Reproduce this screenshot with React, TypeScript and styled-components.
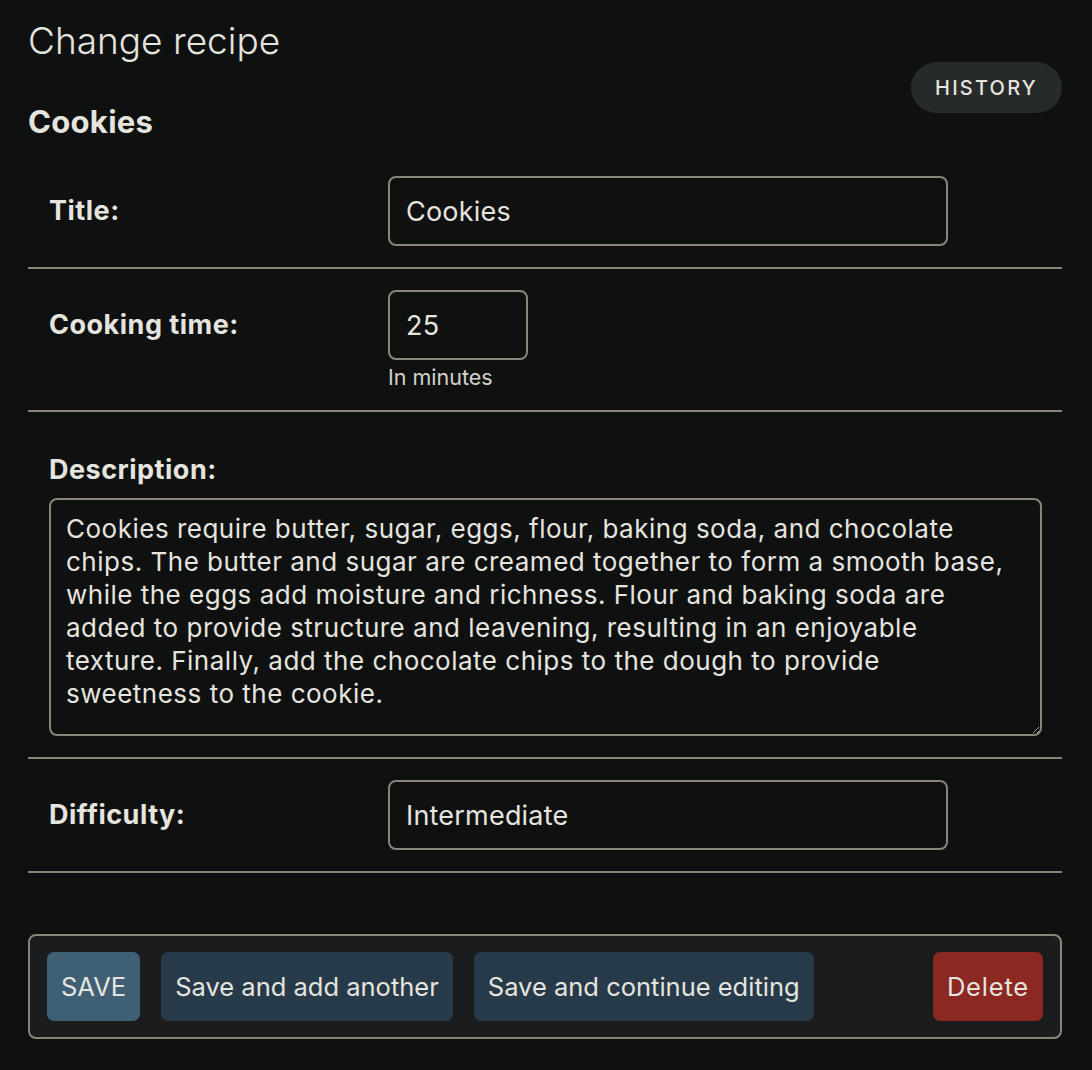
import React from "react";
import styled, { createGlobalStyle } from "styled-components";

const Global = createGlobalStyle`
  html, body {
    margin: 0;
    padding: 0;
    background: #0f1111;
  }
  body {
    font-family: Inter, "Noto Sans", sans-serif;
    color: #e6e4df;
  }
  * { box-sizing: border-box; }
`;

const Page = styled.div`
  padding: 16px 30px 30px 28px;
  min-height: 1070px;
  background: #0f1111;
`;

const Title = styled.h1`
  margin: 0;
  font-size: 37px;
  font-weight: 300;
  line-height: 50px;
  color: #e6e4df;
`;

const HeaderRow = styled.div`
  display: flex;
  justify-content: space-between;
  align-items: flex-start;
`;

const SubTitle = styled.h2`
  margin: 37px 0 0 0;
  font-size: 31px;
  font-weight: 700;
  letter-spacing: 0.3px;
  line-height: 38px;
  color: #e6e4df;
`;

const HistoryButton = styled.button`
  margin-top: -4px;
  height: 51px;
  width: 151px;
  border: none;
  border-radius: 26px;
  background: #272a2b;
  color: #e6e4df;
  font-family: Inter, sans-serif;
  font-size: 20px;
  font-weight: 500;
  letter-spacing: 2.2px;
  text-transform: uppercase;
`;

const Fieldset = styled.div`
  margin-top: 14px;
  display: flex;
  flex-direction: column;
`;

const Row = styled.div<{ $stacked?: boolean }>`
  display: ${(p) => (p.$stacked ? "flex" : "grid")};
  flex-direction: column;
  grid-template-columns: 339px 1fr;
  align-items: ${(p) => (p.$stacked ? "stretch" : "start")};
  gap: ${(p) => (p.$stacked ? "11px" : "0")};
  padding: 21px 21px 21px 21px;
  border-bottom: 2px solid #8a8478;
`;

const Label = styled.label<{ $stacked?: boolean }>`
  font-size: 27px;
  font-weight: 700;
  letter-spacing: 0.5px;
  color: #e6e4df;
  line-height: ${(p) => (p.$stacked ? "34px" : "70px")};
  margin-top: ${(p) => (p.$stacked ? "20px" : "0")};
`;

const Field = styled.div`
  display: flex;
  flex-direction: column;
  align-items: flex-start;
`;

const Input = styled.input<{ $w: number }>`
  width: ${(p) => p.$w}px;
  height: 70px;
  padding: 0 16px;
  background: #0f1111;
  border: 2px solid #8a8478;
  border-radius: 8px;
  color: #e6e4df;
  font-family: Inter, sans-serif;
  font-size: 27px;
  letter-spacing: 0.2px;
  outline: none;
`;

const Help = styled.div`
  margin-top: 5px;
  font-size: 21.5px;
  line-height: 24px;
  color: #d4d1cb;
`;

const TextArea = styled.textarea`
  width: 993px;
  height: 238px;
  padding: 12px 18px 12px 15px;
  background: #0f1111;
  border: 2px solid #8a8478;
  border-radius: 8px;
  color: #e6e4df;
  font-family: Inter, sans-serif;
  font-size: 26px;
  letter-spacing: 0.5px;
  line-height: 33px;
  outline: none;
  resize: both;
`;

const SubmitRow = styled.div`
  margin-top: 61px;
  display: flex;
  align-items: center;
  gap: 21px;
  padding: 16px 17px;
  background: #1b1c1e;
  border: 2px solid #8a8478;
  border-radius: 8px;
`;

const Btn = styled.button<{ $tone: "primary" | "secondary" | "danger" }>`
  height: 69px;
  padding: 0 14px;
  border: none;
  border-radius: 7px;
  font-family: Inter, sans-serif;
  font-size: 25.5px;
  font-weight: 400;
  color: #e6e4df;
  background: ${(p) =>
    p.$tone === "primary" ? "#3e5f74" : p.$tone === "danger" ? "#8c2822" : "#263a4a"};
  margin-left: ${(p) => (p.$tone === "danger" ? "auto" : "0")};
  letter-spacing: ${(p) => (p.$tone === "danger" ? "0.8px" : "0")};
`;

const description =
  "Cookies require butter, sugar, eggs, flour, baking soda, and chocolate chips. The butter and sugar are creamed together to form a smooth base, while the eggs add moisture and richness. Flour and baking soda are added to provide structure and leavening, resulting in an enjoyable texture. Finally, add the chocolate chips to the dough to provide sweetness to the cookie.";

export default function App() {
  return (
    <>
      <Global />
      <Page>
        <Title>Change recipe</Title>
        <HeaderRow>
          <SubTitle>Cookies</SubTitle>
          <HistoryButton>History</HistoryButton>
        </HeaderRow>
        <Fieldset>
          <Row>
            <Label>Title:</Label>
            <Field>
              <Input $w={560} defaultValue="Cookies" />
            </Field>
          </Row>
          <Row>
            <Label>Cooking time:</Label>
            <Field>
              <Input $w={140} defaultValue="25" />
              <Help>In minutes</Help>
            </Field>
          </Row>
          <Row $stacked>
            <Label $stacked>Description:</Label>
            <TextArea defaultValue={description} />
          </Row>
          <Row>
            <Label>Difficulty:</Label>
            <Field>
              <Input $w={560} defaultValue="Intermediate" />
            </Field>
          </Row>
        </Fieldset>
        <SubmitRow>
          <Btn $tone="primary">SAVE</Btn>
          <Btn $tone="secondary">Save and add another</Btn>
          <Btn $tone="secondary">Save and continue editing</Btn>
          <Btn $tone="danger">Delete</Btn>
        </SubmitRow>
      </Page>
    </>
  );
}
